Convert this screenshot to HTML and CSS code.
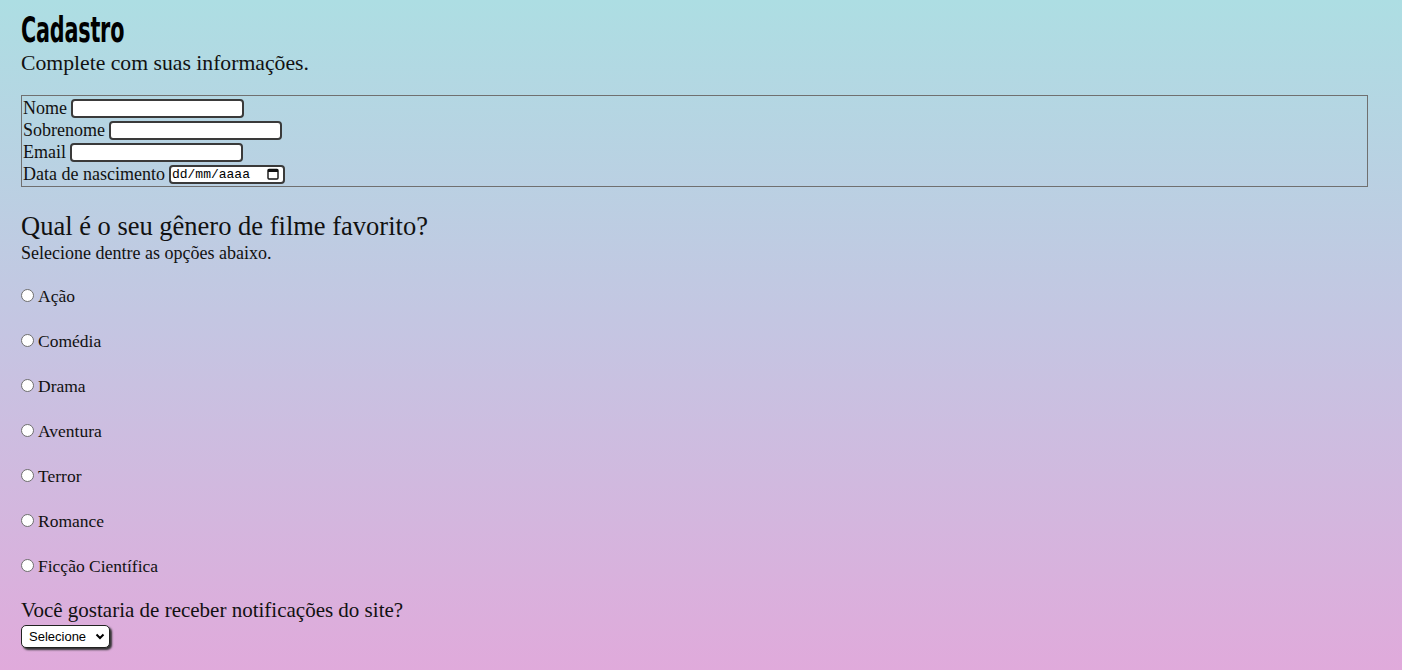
FILE: index.html
```html
<!DOCTYPE html>
<html lang="pt-BR">
<head>
<meta charset="utf-8">
<title>Cadastro</title>
<link rel="stylesheet" href="styles.css">
</head>
<body>
<main class="page">
  <header class="intro">
    <h1 class="title">Cadastro</h1>
    <p class="subtitle">Complete com suas informações.</p>
  </header>
  <fieldset class="fields">
    <div class="row"><label for="nome">Nome</label> <input id="nome" type="text" class="field"></div>
    <div class="row"><label for="sobrenome">Sobrenome</label> <input id="sobrenome" type="text" class="field"></div>
    <div class="row"><label for="email">Email</label> <input id="email" type="email" class="field"></div>
    <div class="row"><label>Data de nascimento</label> <span class="date field"><span class="date-text">dd/mm/aaaa</span><svg class="cal" width="12" height="12" viewBox="0 0 12 12"><rect x="1" y="1.5" width="10" height="9.5" rx="1" fill="none" stroke="#111" stroke-width="1.4"/><rect x="1" y="1.5" width="10" height="2.5" fill="#111"/></svg></span></div>
  </fieldset>
  <section class="genres">
    <h2 class="question">Qual é o seu gênero de filme favorito?</h2>
    <p class="hint">Selecione dentre as opções abaixo.</p>
    <ul class="options">
      <li class="option"><span class="radio"></span>Ação</li>
      <li class="option"><span class="radio"></span>Comédia</li>
      <li class="option"><span class="radio"></span>Drama</li>
      <li class="option"><span class="radio"></span>Aventura</li>
      <li class="option"><span class="radio"></span>Terror</li>
      <li class="option"><span class="radio"></span>Romance</li>
      <li class="option"><span class="radio"></span>Ficção Científica</li>
    </ul>
  </section>
  <section class="notify">
    <p class="notify-q">Você gostaria de receber notificações do site?</p>
    <div class="select"><span>Selecione</span><svg width="10" height="7" viewBox="0 0 10 7"><path d="M1.5 1.5 L5 5 L8.5 1.5" fill="none" stroke="#000" stroke-width="2"/></svg></div>
  </section>
</main>
</body>
</html>
```
FILE: styles.css
```css
html, body {
  margin: 0;
  padding: 0;
  height: 100%;
}
body {
  background: linear-gradient(to bottom, #addee3 0%, #c5c5e2 50%, #e0aadb 100%);
  font-family: "Liberation Serif", "DejaVu Serif", serif;
  color: #111;
  overflow: hidden;
}
.page {
  padding: 0 34px 0 21px;
  display: flex;
  flex-direction: column;
}
.intro {
  display: flex;
  flex-direction: column;
  align-items: flex-start;
}
.title {
  margin: 10px 0 0;
  font-family: "Liberation Sans Narrow", "DejaVu Sans Condensed", "DejaVu Sans", sans-serif;
  font-stretch: condensed;
  font-weight: bold;
  font-size: 36px;
  line-height: 40px;
  letter-spacing: -0.3px;
  color: #000;
  transform: scaleX(0.64);
  transform-origin: left center;
}
.subtitle {
  margin: 0;
  font-size: 21.7px;
  line-height: 26px;
}
.fields {
  margin: 19px 0 0;
  padding: 1px 1px 0;
  height: 92px;
  box-sizing: border-box;
  border: 1px solid #707070;
  min-width: 0;
}
.row {
  display: flex;
  align-items: center;
  gap: 4px;
  height: 22px;
  font-size: 18px;
}
.field {
  box-sizing: border-box;
  width: 173px;
  height: 19px;
  border: 2px solid #3a3a3a;
  border-radius: 4px;
  background: #fff;
  padding: 0;
}
.date {
  width: 116px;
  display: flex;
  align-items: center;
  justify-content: space-between;
  padding: 0 4px 0 1px;
}
.date-text {
  font-family: "Liberation Mono", "DejaVu Sans Mono", monospace;
  font-size: 13px;
  color: #000;
}
.cal {
  display: block;
}
.genres {
  margin-top: 24px;
}
.question {
  margin: 0;
  font-weight: normal;
  font-size: 26.5px;
  line-height: 30px;
}
.hint {
  margin: 0;
  font-size: 18px;
  line-height: 24px;
}
.options {
  list-style: none;
  margin: 21px 0 0;
  padding: 0;
  display: flex;
  flex-direction: column;
  gap: 25px;
}
.option {
  display: flex;
  align-items: center;
  height: 20px;
  font-size: 17.5px;
}
.radio {
  box-sizing: border-box;
  width: 13px;
  height: 13px;
  border: 1px solid #6e6e6e;
  border-radius: 50%;
  background: #fff;
  margin: 0 4px 2px 0;
}
.notify {
  margin-top: 22px;
}
.notify-q {
  margin: 0;
  font-size: 21px;
  line-height: 24px;
}
.select {
  margin-top: 3px;
  box-sizing: border-box;
  width: 89px;
  height: 23px;
  border: 1px solid #222;
  border-radius: 5px;
  background: #fff;
  box-shadow: 2px 2px 2px #333;
  display: flex;
  align-items: center;
  justify-content: space-between;
  padding: 0 4px 0 7px;
  font-family: "Liberation Sans", Arial, sans-serif;
  font-size: 13px;
  color: #000;
}
.select svg {
  display: block;
}
```
